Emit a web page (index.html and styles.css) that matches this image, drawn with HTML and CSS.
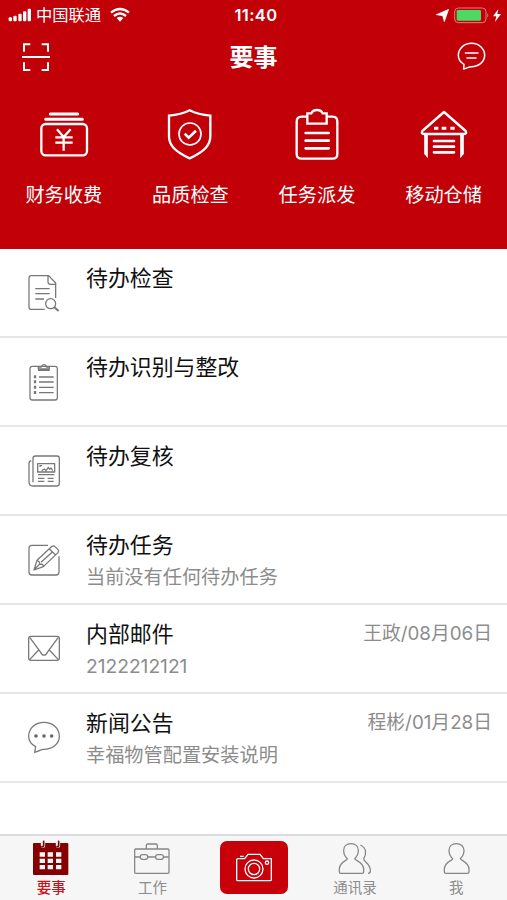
FILE: index.html
```html
<!DOCTYPE html>
<html lang="zh-CN">
<head>
<meta charset="utf-8">
<title>要事</title>
<link rel="stylesheet" href="styles.css">
</head>
<body>
<div class="app">
  <header class="header">
    <div class="status">
      <div class="status-left">
        <svg width="24" height="16" viewBox="0 0 72 48" fill="#fff"><rect x="2" y="28" width="10" height="12" rx="3"/><rect x="16" y="23" width="10" height="17" rx="3"/><rect x="31" y="17" width="10" height="23" rx="3"/><rect x="45" y="10" width="10" height="30" rx="3"/><rect x="59" y="2" width="10" height="38" rx="3"/></svg>
        <span class="carrier">中国联通</span>
        <svg class="wifi" width="20" height="16" viewBox="0 0 60 48" fill="none" stroke="#fff" stroke-width="7"><path d="M3 17Q30-5 57 17"/><path d="M12 27Q30 12 48 27"/><path d="M20 33Q30 25 40 33L30 44Z" fill="#fff" stroke="none"/></svg>
      </div>
      <time class="clock">11:40</time>
      <div class="status-right">
        <svg width="13" height="13" viewBox="0 0 39 39" fill="#fff"><path d="M38 1 25 38 20 20 1 17Z" stroke="#fff" stroke-width="2"/></svg>
        <svg class="battery" width="36" height="17" viewBox="0 0 108 51"><rect x="2" y="3" width="94" height="44" rx="11" fill="none" stroke="#e28080" stroke-width="3"/><rect x="8" y="9" width="73" height="32" rx="4" fill="#4cd964"/><path d="M100 18q6 7 0 14z" fill="#e28080"/></svg>
        <svg width="8" height="13" viewBox="0 0 24 39" fill="#fff"><path d="M16 0 0 22H10L6 39 24 15H13Z"/></svg>
      </div>
    </div>
    <div class="nav">
      <svg width="28" height="30" viewBox="66 127 84 90" fill="none" stroke="#fff" stroke-width="6"><path d="M72 156V134H91M125 134H144V156M72 188V211H91M125 211H144V188M66 172H150"/></svg>
      <h1>要事</h1>
      <svg width="30" height="30" viewBox="612 128 90 90" fill="none" stroke="#fff" stroke-width="4.5" stroke-linejoin="round" stroke-linecap="round"><path d="M632 209 633 195C622 189 616 180 616 168 616 148 633 132 656 132S695 149 695 168 678 202 655 202C649 202 642 206 632 209Z"/><path d="M637 161H675M642 176H669"/></svg>
    </div>
    <div class="actions">
      <div class="action">
        <svg width="50" height="54" viewBox="118 54 150 162" fill="none" stroke="#fff" stroke-width="7"><rect x="125" y="102" width="137" height="94" rx="13"/><path d="M152 72H234M138 88H248" stroke-width="9" stroke-linecap="round"/><path d="M172 118 192 141 213 118M192 141V182M167 142H219M167 158H219"/></svg>
        <span>财务收费</span>
      </div>
      <div class="action">
        <svg width="50" height="54" viewBox="499 54 150 162" fill="none" stroke="#fff" stroke-width="7"><path d="M573 61C590 70 609 75 635 77V139C635 164 620 183 573 205 526 183 511 164 511 139V77C537 75 556 70 573 61Z"/><circle cx="574" cy="132" r="33" stroke-width="5"/><path d="M558 131 570 143 592 122" stroke-width="8"/></svg>
        <span>品质检查</span>
      </div>
      <div class="action">
        <svg width="50" height="54" viewBox="118 54 150 162" fill="none" stroke="#fff" stroke-width="7"><path d="M164 80H147Q132 80 132 95V192Q132 206 147 206H240Q254 206 254 192V95Q254 80 240 80H222M164 70H176Q180 60 193 60T210 70H222V101H164Z"/><path d="M159 129H228M159 152H228M159 175H228" stroke-width="8" stroke-linecap="round"/></svg>
        <span>任务派发</span>
      </div>
      <div class="action">
        <svg width="50" height="54" viewBox="499 54 150 162" fill="none" stroke="#fff" stroke-width="7" stroke-linejoin="round"><path d="M574 66 509 123Q504 132 514 132H634Q644 132 639 123Z"/><path d="M520 132V193M628 132V193" stroke-width="11"/><path d="M515 192H525.500V205ZM633 192H622.500V205Z" fill="#fff" stroke="none"/><path d="M544 115H557M567 115H581M593 115H606" stroke-width="9"/><path d="M544 153H604M544 170H604M544 187H604" stroke-width="8" stroke-linecap="round"/></svg>
        <span>移动仓储</span>
      </div>
    </div>
  </header>
  <main class="list">
    <section class="row">
      <svg class="row-icon" width="34" height="40" viewBox="80 68 102 120"><path d="M133 177H92Q86 177 86 171V83Q86 76 93 76H145L166 98V143M143 77V94Q143 102 151 102H166M105 115H148M105 130H148M105 146H131"/><circle cx="151" cy="160" r="15"/><path d="M161 170 175 182" stroke-width="6"/></svg>
      <div class="row-body"><h2>待办检查</h2></div>
    </section>
    <section class="row">
      <svg class="row-icon" width="34" height="40" viewBox="80 337 102 120"><rect x="89" y="350" width="82" height="101" rx="7"/><path d="M114 358V352H123Q125 345 131 345T138 352H147V358ZM113 362H148M116 382H160M116 397H160M116 413H160M116 429H160"/><path d="M104 377V386M104 392V401M104 408V417M104 424V433" stroke-width="7"/></svg>
      <div class="row-body"><h2>待办识别与整改</h2></div>
    </section>
    <section class="row">
      <svg class="row-icon" width="34" height="40" viewBox="80 64 102 120"><path d="M98 158V86Q98 79 105 79H170Q177 79 177 86V161Q177 169 170 169H97Q86 169 86 157V102Q86 94 93 93M112 102H163V127H112ZM113 135H162M113 146H132M142 146H160M113 155H132M142 155H160M124 123 132 118 137 123 144 113 148 119 152 115 157 123M119 112V108H125"/></svg>
      <div class="row-body"><h2>待办复核</h2></div>
    </section>
    <section class="row">
      <svg class="row-icon" width="34" height="40" viewBox="80 331 102 120"><path d="M143 347H95Q86 347 86 356V427Q86 436 95 436H167Q176 436 176 427V380M101 421 110 392 155 350Q160 347 164 351L173 360Q177 364 173 369L129 411ZM147 358 166 376M110 392 117 397 118 403 127 404 129 411M101 421 117 404M122 398 157 366"/></svg>
      <div class="row-body"><h2>待办任务</h2><p>当前没有任何待办任务</p></div>
    </section>
    <section class="row">
      <svg class="row-icon" width="34" height="40" viewBox="80 58 102 120"><rect x="85" y="80" width="92" height="72" rx="6"/><path d="M88 83 119 125Q131 148 143 125L174 83M88 150 115 121M174 150 147 121"/></svg>
      <div class="row-body"><h2>内部邮件</h2><p>2122212121</p></div>
      <span class="meta">王政/08月06日</span>
    </section>
    <section class="row">
      <svg class="row-icon" width="34" height="40" viewBox="80 325 102 120"><path d="M103 428 106 411C92 404 85 394 85 380 85 356 105 338 131 338S177 356 177 380 156 419 130 419C121 419 116 425 103 428Z"/><g class="dots"><circle cx="107" cy="379" r="5.5"/><circle cx="131" cy="379" r="5.5"/><circle cx="154" cy="379" r="5.5"/></g></svg>
      <div class="row-body"><h2>新闻公告</h2><p>幸福物管配置安装说明</p></div>
      <span class="meta">程彬/01月28日</span>
    </section>
  </main>
  <nav class="tabs">
    <div class="tab active">
      <svg width="38" height="38" viewBox="101 60 114 114"><rect x="104" y="69" width="106" height="96" rx="3" fill="#850000"/><g fill="#f6f6f6"><path d="M124 97h16v13h-16zM148 97h16v13h-16zM173 97h16v13h-16zM124 116h16v13h-16zM148 116h16v13h-16zM173 116h16v13h-16zM124 135h16v13h-16zM148 135h16v13h-16zM173 135h16v13h-16z"/></g><path d="M134 64V77M179 64V77" stroke="#f6f6f6" stroke-width="13" stroke-linecap="round"/><path d="M136 64V75Q136 81 131 80M181 64V75Q181 81 176 80" fill="none" stroke="#850000" stroke-width="5" stroke-linecap="round"/></svg>
      <span>要事</span>
    </div>
    <div class="tab">
      <svg class="line" width="38" height="38" viewBox="403 60 114 114"><rect x="408" y="87" width="103" height="73" rx="3"/><path d="M443 86V76Q443 72 447 72H472Q476 72 476 76V86M409 111H425M447 111H471M494 111H510"/><rect x="425" y="104" width="22" height="14" rx="6"/><rect x="471" y="104" width="23" height="14" rx="6"/></svg>
      <span>工作</span>
    </div>
    <div class="tab">
      <div class="camera">
        <svg width="38" height="30" viewBox="0 0 114 90" fill="none" stroke="#fff" stroke-width="4" stroke-linejoin="round"><path d="M5 80V21Q5 17 9 17H29L39 4H75L85 17H109V80Q109 83 105 83H9Q5 83 5 80ZM15 10H26"/><circle cx="57" cy="48" r="27"/><circle cx="57" cy="48" r="17"/><circle cx="96" cy="29" r="5"/></svg>
      </div>
    </div>
    <div class="tab">
      <svg class="line" width="38" height="38" viewBox="251 60 114 114"><path d="M285 116C278 110 274 100 274 91 274 79 283 71 296 71S318 79 318 91C318 101 314 110 307 116 308 122 334 125 334 148V156Q334 160 329 160H266Q261 160 261 156V148C261 125 285 122 285 116Z"/><path d="M324 75C343 83 343 103 334 116 332 124 354 130 354 151V154Q354 160 347 160"/></svg>
      <span>通讯录</span>
    </div>
    <div class="tab">
      <svg class="line" width="38" height="38" viewBox="553 60 114 114"><path d="M600 116C593 110 589 100 589 91 589 79 598 71 611 71S634 79 634 91C634 101 630 110 623 116 624 122 649 125 649 148V156Q649 160 644 160H580Q575 160 575 156V148C575 125 600 122 600 116Z"/></svg>
      <span>我</span>
    </div>
  </nav>
</div>
</body>
</html>
```
FILE: styles.css
```css
* { box-sizing: border-box; }
body { margin: 0; font-family: "Noto Sans CJK SC", sans-serif; background: #fff; }
svg { display: block; flex: none; }
h1, h2, p { margin: 0; font-weight: 400; }
.app { height: 900px; display: flex; flex-direction: column; overflow: hidden; }

.header { height: 249px; flex: none; background: #c10008; color: #fff; }
.status { height: 30px; padding: 0 6px 0 8px; display: grid; grid-template-columns: 1fr auto 1fr; align-items: center; }
.status-left, .status-right { display: flex; align-items: center; }
.status-left svg:first-child { margin-top: 1px; }
.carrier { margin-left: 4px; margin-top: -2px; font-size: 16.3px; line-height: 30px; }
.wifi { margin-left: 9px; margin-top: -1px; }
.clock { margin-left: 3px; font: 600 16.5px/30px Inter, sans-serif; letter-spacing: .4px; }
.status-right { justify-content: flex-end; }
.battery { margin: 0 3px 0 5px; }
.nav { height: 54px; padding: 0 20px 0 22px; display: flex; align-items: center; justify-content: space-between; }
.nav h1 { font-size: 24px; line-height: 54px; margin-top: -2px; font-weight: 700; }

.actions { display: grid; grid-template-columns: repeat(4, 126.6px); padding: 24px 0 0 .5px; }
.action { display: flex; flex-direction: column; align-items: center; font-size: 19.2px; line-height: 28px; }
.action span { margin-top: 18px; }

.list { flex: 1; }
.row { height: 89px; border-bottom: 2px solid #e6e6e6; padding: 0 15px 0 26.5px; display: flex; }
.row-icon { margin-top: 24px; fill: none; stroke: #777; stroke-width: 3.8; stroke-linejoin: round; }
.dots { fill: #666; stroke: none; }
.row-body { flex: 1; margin-left: 25.500px; padding-top: 12px; }
.row h2 { font-size: 21.9px; line-height: 32px; color: #111; }
.row p, .meta { font-family: Inter, "Noto Sans CJK SC", sans-serif; font-size: 19.2px; line-height: 28px; color: #8c8c8c; }
.row p { margin-top: 3px; }
.meta { margin-top: 15px; font-size: 18.8px; }

.tabs { height: 66px; flex: none; border-top: 2px solid #dcdcdc; background: #f6f6f6; display: grid; grid-template-columns: repeat(5, 1fr); padding-left: .5px; }
.tab { display: flex; flex-direction: column; align-items: center; padding-top: 4px; font-size: 14.5px; line-height: 18px; color: #8c8c8c; }
.tab.active { color: #c8141c; font-weight: 500; }
.line { fill: none; stroke: #858585; stroke-width: 3.8; stroke-linejoin: round; }
.camera { width: 68px; height: 53px; margin-top: 1px; border-radius: 7px; background: #c70009; display: flex; align-items: center; justify-content: center; }
```
